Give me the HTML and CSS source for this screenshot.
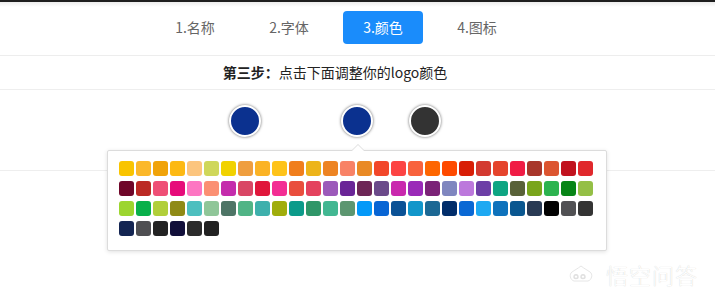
FILE: index.html
```html
<!DOCTYPE html>
<html lang="zh-CN">
<head>
<meta charset="utf-8">
<title>logo 颜色</title>
<link rel="stylesheet" href="styles.css">
</head>
<body>
<div class="topbar"></div>
<nav class="nav">
  <div class="nav-inner">
    <span class="tab">1.名称</span>
    <span class="tab">2.字体</span>
    <span class="tab active">3.颜色</span>
    <span class="tab">4.图标</span>
  </div>
</nav>
<div class="step"><div class="step-inner"><b>第三步：</b>点击下面调整你的logo颜色</div></div>
<div class="picker">
  <div class="dots">
    <span class="dot dot-bg"></span>
    <span class="dot dot-icon"></span>
    <span class="dot dot-text"></span>
  </div>
  <div class="popover">
    <div class="swatches" id="sw"></div>
  </div>
</div>
<div class="watermark">
  <svg class="wm-icon" width="24" height="18" viewBox="0 0 24 18">
    <path d="M12 1 C8 4 6 5 3 7 C0 9 1 15 5 16 L19 16 C23 15 24 9 21 7 C18 5 16 4 12 1 Z" fill="#fff" stroke="#e6e6e6" stroke-width="1"/>
    <path d="M5 12 C5 9 9 9 9 12 C9 14 5 14 5 12 Z M12 12 C12 9 16 9 16 12 C16 14 12 14 12 12 Z" fill="none" stroke="#e0e0e0" stroke-width="1.4"/>
  </svg>
  <span class="wm-text">悟空问答</span>
</div>
<script src="app.js"></script>
</body>
</html>
```
FILE: app.js
```js
var colors = [
"#f9c400","#fbb82a","#f0a30a","#fdb913","#fcc57e","#cfd75a","#f1d200","#ef9e3f","#fbb325","#fec31a","#f07e1d","#edb41a","#ed8423","#f88266","#e98a25","#f2472a","#fc4444","#f8623c","#fe6600","#fe4a00","#d81e06","#d33a31","#e5442c","#f01c45","#a8362a","#dc5530","#c1121e","#e0282c",
"#6f0629","#bb2a24","#ef4f76","#e60b7a","#fd76c2","#fb9073","#c42cac","#d94765","#e0173b","#f32d94","#e94e3d","#e4425e","#9c5aba","#6a2597","#6d2656","#6b4a8a","#c928ae","#9a2ab8","#7b2377","#7f86bf","#bc78dc","#6c3fa6","#0ea583","#596238","#79a51c","#2cb34f","#078517","#94bf46",
"#9cd52f","#09b04a","#b1cf3a","#8f8a16","#4dbfbf","#8fc698","#4e7566","#51b486","#3eb0ac","#a0ad0c","#0c9b8a","#2f9668","#42b792","#5c9670","#0499f8","#0865d4","#0b5296","#1296ca","#1c6894","#012d6a","#0a68d4","#1ea9f2","#0e72bc","#0a5790","#293a54","#020202","#515154","#343434",
"#142552","#4f4f52","#232323","#110f3a","#2c2c2c","#222222"
];
var sw = document.getElementById("sw");
colors.forEach(function (c) {
  var s = document.createElement("span");
  s.className = "swatch";
  s.style.background = c;
  sw.appendChild(s);
});
```
FILE: styles.css
```css
html, body {
  margin: 0;
  padding: 0;
  background: #fff;
}
body {
  font-family: "Microsoft YaHei", "Noto Sans CJK SC", "Noto Sans", sans-serif;
  font-size: 14px;
  color: #333;
  width: 715px;
  height: 297px;
  overflow: hidden;
  position: relative;
}
.topbar {
  height: 5px;
  border-top: 2px solid #1e1e1e;
  background: linear-gradient(#ececec, #fff);
}
.nav {
  height: 48px;
  border-bottom: 1px solid #ededed;
}
.nav-inner {
  display: flex;
  gap: 14px;
  padding: 4px 0 0 155px;
}
.tab {
  width: 80px;
  height: 33px;
  line-height: 33px;
  text-align: center;
  color: #666;
  border-radius: 4px;
}
.tab.active {
  background: #1a8cfb;
  color: #fff;
}
.step {
  height: 33px;
  border-bottom: 1px solid #eeeeee;
}
.step-inner {
  width: 670px;
  text-align: center;
  line-height: 33px;
  color: #222;
}
.step-inner b {
  font-weight: bold;
}
.picker {
  height: 80px;
  border-bottom: 1px solid #eeeeee;
  position: relative;
}
.dots {
  display: flex;
  padding: 15px 0 0 229px;
}
.dot {
  width: 28px;
  height: 28px;
  border-radius: 50%;
  border: 2px solid #fff;
  box-shadow: 0 0 3px rgba(0, 0, 0, 0.6);
}
.dot-bg, .dot-icon { background: #0b318f; }
.dot-text { background: #333333; }
.dot-icon { margin-left: 80px; }
.dot-text { margin-left: 36px; }
.popover {
  position: absolute;
  left: 107px;
  top: 60px;
  width: 475px;
  padding: 10px 12px 14px 11px;
  border: 1px solid #dcdcdc;
  border-radius: 2px;
  background: #fff;
  box-shadow: 0 1px 4px rgba(0, 0, 0, 0.12);
  z-index: 2;
}
.popover::before,
.popover::after {
  content: "";
  position: absolute;
  left: 243px;
  width: 0;
  height: 0;
  border-left: 7px solid transparent;
  border-right: 7px solid transparent;
}
.popover::before {
  top: -7px;
  border-bottom: 7px solid #dcdcdc;
}
.popover::after {
  top: -6px;
  border-bottom: 7px solid #fff;
}
.swatches {
  display: grid;
  grid-template-columns: repeat(28, 15px);
  grid-auto-rows: 15px;
  column-gap: 2px;
  row-gap: 5px;
}
.swatch {
  border-radius: 3px;
}
.watermark {
  position: absolute;
  left: 569px;
  top: 258px;
  display: flex;
  align-items: center;
  gap: 13px;
}
.wm-text {
  font-size: 22px;
  font-weight: 300;
  color: #fff;
  letter-spacing: 1px;
  text-shadow: 0 0 1px rgba(0, 0, 0, 0.22);
}
```
